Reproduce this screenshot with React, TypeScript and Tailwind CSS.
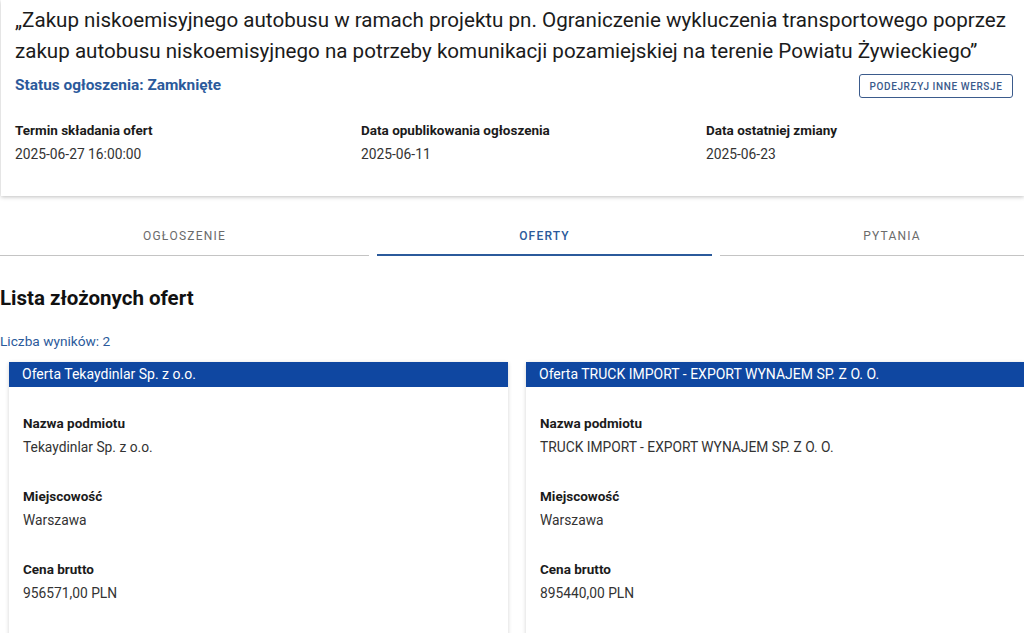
const fields = [
  { label: 'Termin składania ofert', value: '2025-06-27 16:00:00' },
  { label: 'Data opublikowania ogłoszenia', value: '2025-06-11' },
  { label: 'Data ostatniej zmiany', value: '2025-06-23' },
];

const offers = [
  { name: 'Tekaydinlar Sp. z o.o.', city: 'Warszawa', price: '956571,00 PLN' },
  { name: 'TRUCK IMPORT - EXPORT WYNAJEM SP. Z O. O.', city: 'Warszawa', price: '895440,00 PLN' },
];

const Field = ({ label, value }: { label: string; value: string }) => (
  <div>
    <div className="text-[13.5px] font-bold leading-5 text-[#1b1b1b]">{label}</div>
    <div className="mt-1 text-[13.8px] leading-5 text-[#333]">{value}</div>
  </div>
);

const OfferCard = ({ name, city, price }: { name: string; city: string; price: string }) => (
  <div className="w-[499px] shrink-0 bg-white shadow-[0_1px_4px_rgba(0,0,0,0.18)]">
    <div className="flex h-[25px] items-center bg-[#0f47a1] px-[13px] text-[14px] text-white">Oferta {name}</div>
    <div className="flex flex-col gap-[29px] px-[14px] pt-[26px] pb-10">
      <Field label="Nazwa podmiotu" value={name} />
      <Field label="Miejscowość" value={city} />
      <Field label="Cena brutto" value={price} />
    </div>
  </div>
);

export default function App() {
  return (
    <div className="h-[633px] w-[1024px] overflow-hidden bg-white font-['Roboto',sans-serif]">
      <div className="ml-px bg-white px-[14px] pt-[5px] pb-[32px] shadow-[0_1px_4px_rgba(0,0,0,0.25)]">
        <h1 className="mr-[-8px] text-[20.6px] leading-[31px] text-[#1b1b1b]">
          „Zakup niskoemisyjnego autobusu w ramach projektu pn. Ograniczenie wykluczenia transportowego poprzez zakup autobusu niskoemisyjnego na potrzeby komunikacji pozamiejskiej na terenie Powiatu Żywieckiego”
        </h1>
        <div className="mt-[7px] flex items-center justify-between">
          <div className="text-[15.4px] font-bold text-[#2b5a9b]">Status ogłoszenia: Zamknięte</div>
          <button className="mr-[-3px] flex h-[24px] w-[154px] items-center justify-center rounded-[3px] border border-[#3b5b8c] text-[10px] font-medium tracking-[0.6px] text-[#3b5b8c]">
            PODEJRZYJ INNE WERSJE
          </button>
        </div>
        <div className="mt-[22px] grid grid-cols-[346px_345px_1fr]">
          {fields.map((f) => (
            <Field key={f.label} {...f} />
          ))}
        </div>
      </div>

      <div className="mt-[20px] flex gap-2 text-[12px] tracking-[1.2px]">
        <div className="flex h-[40px] w-[369px] shrink-0 items-center justify-center border-b border-[#c4c4c4] text-[#6b6b6b]">OGŁOSZENIE</div>
        <div className="flex h-[40px] w-[335px] shrink-0 items-center justify-center border-b-2 border-[#2b5a9b] pt-[1px] font-medium text-[#2b5a9b]">OFERTY</div>
        <div className="flex h-[40px] w-[344px] shrink-0 items-center justify-center border-b border-[#c4c4c4] text-[#6b6b6b]">PYTANIA</div>
      </div>

      <h2 className="mt-[31px] text-[20.5px] font-bold leading-[22px] text-[#111]">Lista złożonych ofert</h2>
      <div className="mt-[22px] text-[13.7px] leading-5 text-[#2b5a9b]">Liczba wyników: 2</div>

      <div className="mt-[11px] flex gap-[18px] pl-[9px]">
        {offers.map((o) => (
          <OfferCard key={o.name} {...o} />
        ))}
      </div>
    </div>
  );
}
